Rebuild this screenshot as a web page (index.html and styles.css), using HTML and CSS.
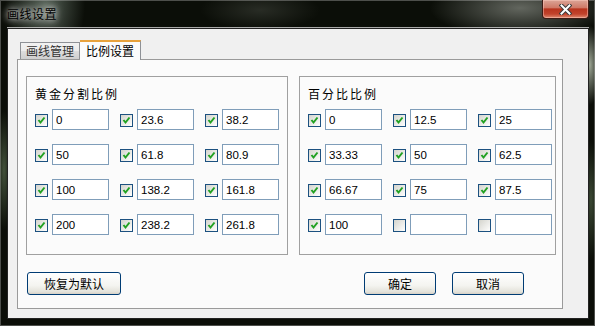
FILE: index.html
```html
<!DOCTYPE html>
<html lang="zh-CN">
<head>
    <meta charset="UTF-8">
    <title>画线设置</title>
    <link rel="stylesheet" href="styles.css">
</head>
<body>
    <div class="window">
        <div class="titlebar">
            <span class="title">画线设置</span>
            <span class="close">
                <svg width="13" height="11" viewBox="0 0 13 11">
                    <path d="M2.5 1.5 L10.5 9.5 M10.5 1.5 L2.5 9.5" stroke="#3a3a3a" stroke-width="4" stroke-linecap="square"/>
                    <path d="M2.5 1.5 L10.5 9.5 M10.5 1.5 L2.5 9.5" stroke="#ffffff" stroke-width="2" stroke-linecap="square"/>
                </svg>
            </span>
        </div>

        <div class="client">
            <div class="tabs">
                <span class="tab">画线管理</span>
                <span class="tab active">比例设置</span>
            </div>

            <div class="panel">
                <div class="groups">
                    <div class="group group-left">
                        <div class="group-title">黄金分割比例</div>
                        <div class="grid">
                            <div class="cell"><span class="check on"></span><input type="text" value="0"></div>
                            <div class="cell"><span class="check on"></span><input type="text" value="23.6"></div>
                            <div class="cell"><span class="check on"></span><input type="text" value="38.2"></div>
                            <div class="cell"><span class="check on"></span><input type="text" value="50"></div>
                            <div class="cell"><span class="check on"></span><input type="text" value="61.8"></div>
                            <div class="cell"><span class="check on"></span><input type="text" value="80.9"></div>
                            <div class="cell"><span class="check on"></span><input type="text" value="100"></div>
                            <div class="cell"><span class="check on"></span><input type="text" value="138.2"></div>
                            <div class="cell"><span class="check on"></span><input type="text" value="161.8"></div>
                            <div class="cell"><span class="check on"></span><input type="text" value="200"></div>
                            <div class="cell"><span class="check on"></span><input type="text" value="238.2"></div>
                            <div class="cell"><span class="check on"></span><input type="text" value="261.8"></div>
                        </div>
                    </div>

                    <div class="group group-right">
                        <div class="group-title">百分比比例</div>
                        <div class="grid">
                            <div class="cell"><span class="check on"></span><input type="text" value="0"></div>
                            <div class="cell"><span class="check on"></span><input type="text" value="12.5"></div>
                            <div class="cell"><span class="check on"></span><input type="text" value="25"></div>
                            <div class="cell"><span class="check on"></span><input type="text" value="33.33"></div>
                            <div class="cell"><span class="check on"></span><input type="text" value="50"></div>
                            <div class="cell"><span class="check on"></span><input type="text" value="62.5"></div>
                            <div class="cell"><span class="check on"></span><input type="text" value="66.67"></div>
                            <div class="cell"><span class="check on"></span><input type="text" value="75"></div>
                            <div class="cell"><span class="check on"></span><input type="text" value="87.5"></div>
                            <div class="cell"><span class="check on"></span><input type="text" value="100"></div>
                            <div class="cell"><span class="check"></span><input type="text" value=""></div>
                            <div class="cell"><span class="check"></span><input type="text" value=""></div>
                        </div>
                    </div>
                </div>

                <div class="actions">
                    <button class="btn btn-wide">恢复为默认</button>
                    <div class="spacer"></div>
                    <button class="btn">确定</button>
                    <button class="btn">取消</button>
                </div>
            </div>
        </div>
    </div>

    <script>
        // checkmarks are drawn the same way for every ticked box
        document.querySelectorAll('.check.on').forEach(function (box) {
            box.innerHTML = '<svg width="11" height="11" viewBox="0 0 11 11"><path d="M2.5 5 L4.5 7.5 L8.5 2.5" fill="none" stroke="#21a121" stroke-width="2"/></svg>';
        });
    </script>
</body>
</html>
```

FILE: styles.css
```css
html, body {
    margin: 0;
    padding: 0;
}
body {
    font-family: "Noto Sans CJK SC", "Liberation Sans", sans-serif;
    font-size: 12px;
    color: #000;
}
.window {
    width: 595px;
    height: 326px;
    box-sizing: border-box;
    overflow: hidden;
    background:
        radial-gradient(ellipse 40px 60px at 45px 5px, rgba(150, 170, 155, 0.55), transparent),
        radial-gradient(ellipse 90px 30px at 520px 8px, rgba(120, 124, 116, 0.8), transparent),
        radial-gradient(ellipse 60px 20px at 260px 10px, rgba(60, 64, 56, 0.6), transparent),
        radial-gradient(ellipse 10px 40px at 590px 65px, rgba(190, 200, 180, 0.8), transparent),
        radial-gradient(ellipse 8px 60px at 4px 170px, rgba(90, 110, 80, 0.7), transparent),
        radial-gradient(ellipse 8px 60px at 591px 200px, rgba(90, 110, 80, 0.6), transparent),
        #0b0e08;
    box-shadow: inset 0 0 0 1px rgba(200, 200, 200, 0.35);
}
.titlebar {
    height: 28px;
    display: flex;
    justify-content: space-between;
}
.title {
    padding-left: 7px;
    line-height: 28px;
    letter-spacing: 0.5px;
    color: #000;
    text-shadow: 0 0 6px rgba(255, 255, 255, 0.9), 0 0 10px rgba(255, 255, 255, 0.7);
}
.close {
    width: 47px;
    height: 19px;
    margin-right: 6px;
    box-sizing: border-box;
    border: 1px solid #3d1b14;
    border-top: none;
    border-radius: 0 0 4px 4px;
    background: linear-gradient(#dba597 0%, #cf7a68 42%, #b8341e 50%, #c2432c 78%, #e08a70 100%);
    box-shadow: inset 0 0 0 1px rgba(255, 210, 200, 0.45);
    display: flex;
    align-items: center;
    justify-content: center;
}
.client {
    width: 582px;
    height: 291px;
    margin-left: 7px;
    box-sizing: border-box;
    border: 1px solid #222;
    box-shadow: 0 -1px 0 rgba(210, 210, 210, 0.8);
    background: #f0f0f0;
    padding: 11px 0 0 9px;
}
.tabs {
    display: flex;
    align-items: flex-end;
    height: 19px;
    padding-left: 3px;
    position: relative;
    z-index: 1;
}
.tab {
    height: 17px;
    box-sizing: border-box;
    padding: 0 5px;
    line-height: 15px;
    border: 1px solid #8e9196;
    border-bottom: none;
    background: linear-gradient(#f2f2f2, #ebebeb 50%, #dddddd 51%, #cfcfcf);
    color: #333;
}
.tab.active {
    height: 20px;
    margin-bottom: -1px;
    padding: 0 6px;
    line-height: 18px;
    border-color: #8e9196;
    border-top: 2px solid #e8a23c;
    border-left: none;
    background: #fbfbfb;
    color: #000;
}
.panel {
    width: 546px;
    height: 250px;
    box-sizing: border-box;
    border: 1px solid #9a9a9a;
    background: #fbfbfb;
    padding: 16px 0 0 8px;
}
.groups {
    display: flex;
    gap: 11px;
}
.group {
    height: 179px;
    box-sizing: border-box;
    border: 1px solid #a0a0a0;
    padding: 9px 0 0 8px;
}
.group-left {
    width: 262px;
}
.group-right {
    width: 257px;
}
.group-title {
    line-height: 16px;
    letter-spacing: 2px;
    margin-bottom: 7px;
}
.grid {
    display: grid;
    grid-template-columns: repeat(3, 74px);
    column-gap: 11px;
    row-gap: 14px;
}
.cell {
    display: flex;
    align-items: center;
    gap: 4px;
}
.check {
    width: 13px;
    height: 13px;
    box-sizing: border-box;
    border: 1px solid #1c5180;
    background: linear-gradient(135deg, #d4d4cd, #f6f6f4 80%, #fff);
    display: flex;
    margin-top: 1px;
}
.cell input {
    width: 57px;
    height: 21px;
    box-sizing: border-box;
    margin: 0;
    border: 1px solid #7f9db9;
    padding: 0 3px;
    font-family: "Liberation Sans", sans-serif;
    font-size: 11.5px;
    color: #000;
    background: #fff;
    outline: none;
}
.actions {
    display: flex;
    margin-top: 17px;
    padding-left: 1px;
    padding-right: 38px;
    gap: 16px;
}
.spacer {
    flex: 1;
}
.btn {
    width: 72px;
    height: 23px;
    box-sizing: border-box;
    border: 1px solid #003c74;
    border-radius: 3px;
    background: linear-gradient(#ffffff, #f4f4f0 60%, #e3e2da 90%, #d6d0c5);
    font-family: "Noto Sans CJK SC", sans-serif;
    font-size: 12px;
    color: #000;
    padding: 0;
}
.btn-wide {
    width: 94px;
}
```
